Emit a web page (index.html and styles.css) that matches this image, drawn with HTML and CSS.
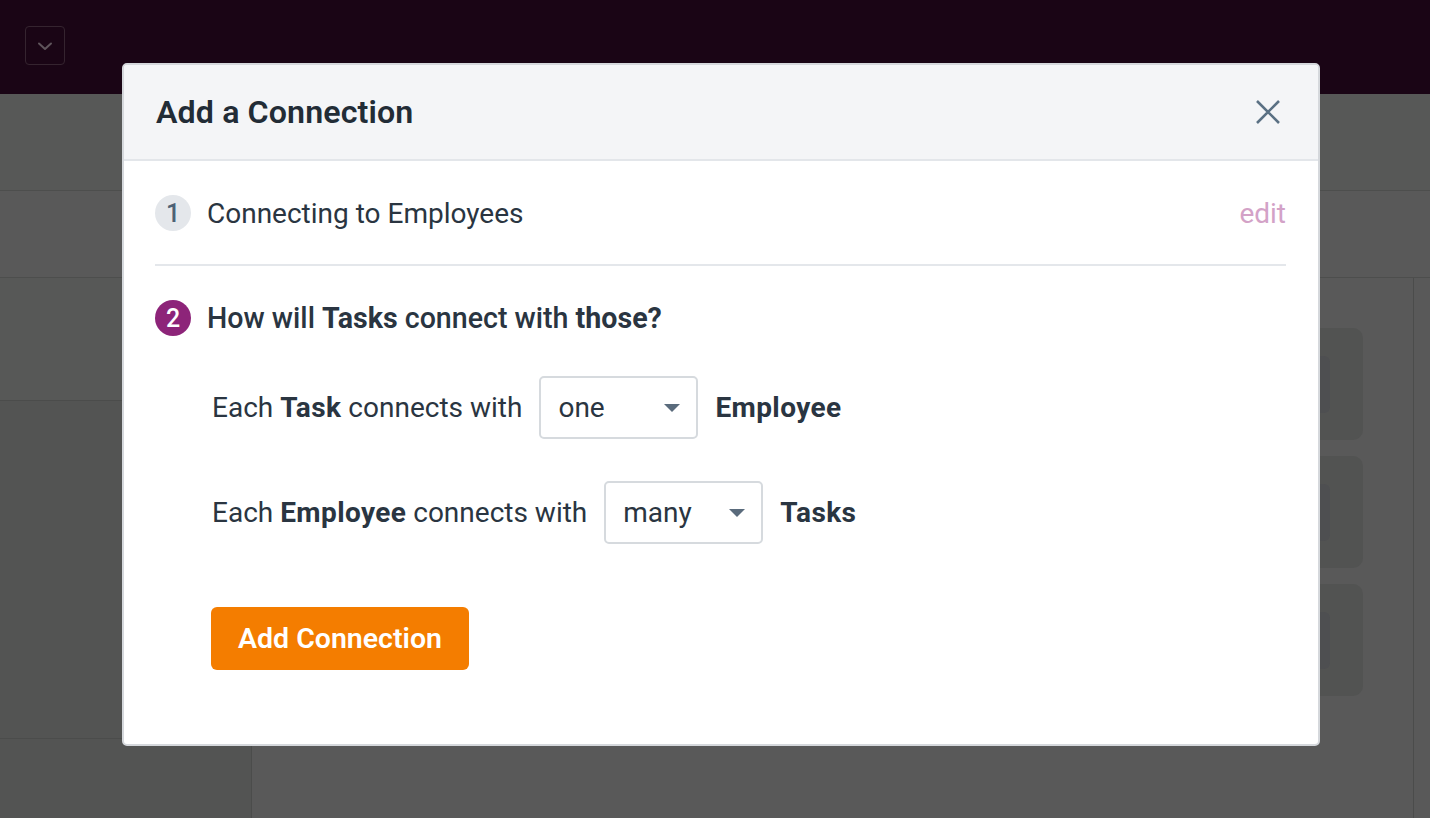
FILE: index.html
```html
<!DOCTYPE html>
<html lang="en">
<head>
<meta charset="utf-8">
<title>Add a Connection</title>
<link rel="stylesheet" href="styles.css">
</head>
<body>
<div class="page">
  <header class="topbar">
    <button class="menu-btn" type="button" aria-label="Menu">
      <svg width="20" height="20" viewBox="0 0 20 20"><path d="M4 7.5l6 5.5 6-5.5" fill="none" stroke="#5f545b" stroke-width="2" stroke-linecap="round" stroke-linejoin="round"/></svg>
    </button>
  </header>
  <div class="subbar"></div>
  <div class="toolbar"></div>
  <div class="main">
    <aside class="sidebar">
      <div class="sb-section sb-a"></div>
      <div class="sb-section sb-b"></div>
      <div class="sb-rest"></div>
    </aside>
    <section class="canvas">
      <div class="cards">
        <div class="card"><div class="card-item"></div></div>
        <div class="card"><div class="card-item"></div></div>
        <div class="card"><div class="card-item"></div></div>
      </div>
    </section>
    <div class="rightcol"></div>
  </div>
</div>

<div class="modal" role="dialog" aria-labelledby="modal-title">
  <div class="modal-header">
    <h2 id="modal-title" class="modal-title">Add a Connection</h2>
    <button class="close-btn" type="button" aria-label="Close">
      <svg width="26" height="26" viewBox="0 0 26 26"><path d="M2 2L24 24M24 2L2 24" fill="none" stroke="#5b7184" stroke-width="2.6"/></svg>
    </button>
  </div>
  <div class="modal-body">
    <div class="step step-done">
      <span class="step-num step-num-done">1</span>
      <span class="step-label">Connecting to Employees</span>
      <a class="edit-link" href="#">edit</a>
    </div>
    <hr class="divider">
    <div class="step step-active">
      <span class="step-num step-num-active">2</span>
      <span class="step-label step-question">How will <b>Tasks</b> connect with <b>those?</b></span>
    </div>
    <div class="rule-row">
      <span class="rule-text">Each <b>Task</b> connects with</span>
      <div class="select">
        <span class="select-value">one</span>
        <span class="caret"></span>
      </div>
      <b class="rule-target">Employee</b>
    </div>
    <div class="rule-row">
      <span class="rule-text">Each <b>Employee</b> connects with</span>
      <div class="select">
        <span class="select-value">many</span>
        <span class="caret"></span>
      </div>
      <b class="rule-target">Tasks</b>
    </div>
    <div class="actions">
      <button class="primary-btn" type="button">Add Connection</button>
    </div>
  </div>
</div>
</body>
</html>
```

FILE: styles.css
```css
* { box-sizing: border-box; }

html, body {
  margin: 0;
  padding: 0;
}

body {
  width: 1430px;
  height: 818px;
  overflow: hidden;
  background: #595959;
  font-family: Roboto, "Liberation Sans", Arial, sans-serif;
  color: #2a3541;
  position: relative;
}

/* ---------- underlying page (dimmed) ---------- */
.page {
  display: flex;
  flex-direction: column;
  height: 818px;
}

.topbar {
  height: 94px;
  flex: none;
  background: #1a0515;
  padding: 26px 25px;
}

.menu-btn {
  width: 40px;
  height: 39px;
  border: 1px solid #35242f;
  border-radius: 4px;
  background: transparent;
  display: flex;
  align-items: center;
  justify-content: center;
  padding: 0;
}

.subbar {
  height: 97px;
  flex: none;
  background: #575857;
  border-bottom: 1px solid #4d4e4d;
}

.toolbar {
  height: 87px;
  flex: none;
  background: #595959;
  border-bottom: 1px solid #4d4e4d;
}

.main {
  flex: 1;
  display: flex;
  min-height: 0;
}

.sidebar {
  width: 252px;
  flex: none;
  display: flex;
  flex-direction: column;
  border-right: 1px solid #4b4c4b;
  background: #535453;
}

.sb-section {
  border-bottom: 1px solid #4b4c4b;
}

.sb-a {
  height: 123px;
  background: #575857;
}

.sb-b {
  height: 338px;
}

.sb-rest {
  flex: 1;
}

.canvas {
  flex: 1;
  display: flex;
  justify-content: flex-end;
  padding: 50px 50px 0 0;
}

.cards {
  width: 300px;
  display: flex;
  flex-direction: column;
  gap: 16px;
}

.card {
  height: 112px;
  border-radius: 10px;
  background: #525352;
  display: flex;
  justify-content: flex-end;
  align-items: center;
  padding-right: 33px;
}

.card-item {
  width: 120px;
  height: 57px;
  border-radius: 6px;
  background: #4e4f51;
}

.rightcol {
  width: 17px;
  flex: none;
  border-left: 1px solid #4b4c4b;
}

/* ---------- modal ---------- */
.modal {
  position: absolute;
  left: 122px;
  top: 63px;
  width: 1198px;
  height: 683px;
  background: #ffffff;
  border: 2px solid #d5d8dc;
  border-radius: 5px;
  overflow: hidden;
}

.modal-header {
  height: 96px;
  background: #f4f5f7;
  border-bottom: 2px solid #e3e6ea;
  display: flex;
  align-items: center;
  justify-content: space-between;
  padding: 0 37px 0 32px;
}

.modal-title {
  margin: 0;
  font-size: 32.2px;
  font-weight: 600;
  color: #222c36;
  letter-spacing: 0.1px;
}

.close-btn {
  border: 0;
  background: transparent;
  padding: 0;
  display: flex;
}

.modal-body {
  padding: 34px 32px 0 31px;
}

.step {
  display: flex;
  align-items: center;
  height: 36px;
  font-size: 28px;
}

.step-num {
  width: 36px;
  height: 36px;
  flex: none;
  border-radius: 50%;
  display: flex;
  align-items: center;
  justify-content: center;
  font-size: 25px;
  font-weight: 500;
  margin-right: 16px;
}

.step-num-done {
  background: #e4e7eb;
  color: #4d6175;
}

.step-num-active {
  background: #8d2479;
  color: #ffffff;
}

.step-label {
  flex: 1;
  color: #2a3541;
}

.step-question {
  font-weight: 500;
  font-size: 28.6px;
}

.step-question b,
.rule-text b,
.rule-target {
  font-weight: 700;
}

.rule-text b,
.rule-target {
  letter-spacing: 0.4px;
}

.edit-link {
  color: #d3a2c7;
  text-decoration: none;
  font-size: 28px;
}

.divider {
  border: 0;
  height: 2px;
  background: #e4e7eb;
  margin: 33px 0 34px;
}

.rule-row {
  display: flex;
  align-items: center;
  gap: 17px;
  margin: 40px 0 0 57px;
  font-size: 28px;
}

.rule-row + .rule-row {
  margin-top: 42px;
}

.select {
  width: 159px;
  height: 63px;
  border: 2px solid #d6dade;
  border-radius: 5px;
  display: flex;
  align-items: center;
  justify-content: space-between;
  padding: 0 16px 0 17px;
  font-size: 28px;
}

.caret {
  width: 0;
  height: 0;
  border-left: 8px solid transparent;
  border-right: 8px solid transparent;
  border-top: 8px solid #5a6b7c;
}

.actions {
  margin: 63px 0 0 56px;
}

.primary-btn {
  height: 63px;
  width: 258px;
  border: 0;
  border-radius: 6px;
  background: #f47d00;
  color: #ffffff;
  font-family: Roboto, "Liberation Sans", Arial, sans-serif;
  font-size: 28.5px;
  font-weight: 600;
  padding: 0;
}
```
